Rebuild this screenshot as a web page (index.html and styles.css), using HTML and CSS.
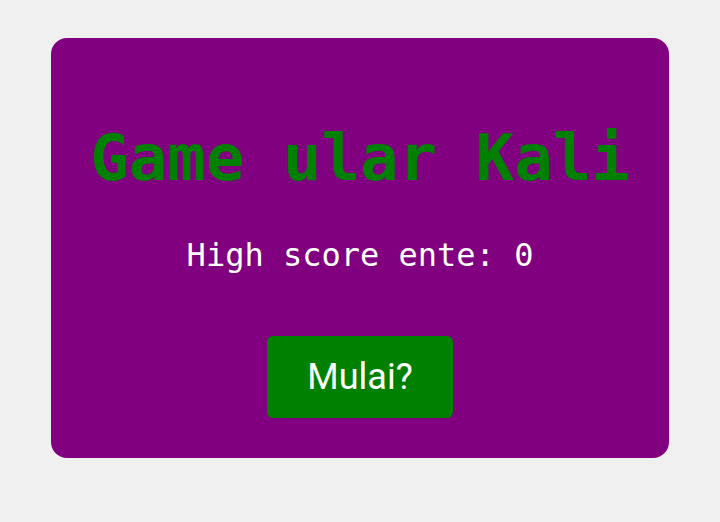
FILE: index.html
```html
<!DOCTYPE html>
<html>
<head>
<meta charset="utf-8">
<link rel="stylesheet" href="styles.css">
</head>
<body>
<div class="card">
  <h1 class="title">Game ular Kali</h1>
  <p class="score">High score ente: 0</p>
  <button class="start">Mulai?</button>
</div>
</body>
</html>
```
FILE: styles.css
```css
html, body {
  margin: 0;
  padding: 0;
}
body {
  background: #f0f0f0;
  width: 720px;
  height: 522px;
  padding-top: 38px;
  box-sizing: border-box;
}
.card {
  width: 618px;
  height: 420px;
  margin: 0 auto;
  background: #800080;
  border-radius: 16px;
  display: flex;
  flex-direction: column;
  align-items: center;
  box-sizing: border-box;
  padding-top: 80px;
}
.title {
  margin: 0;
  font-family: "DejaVu Sans Mono", monospace;
  font-weight: bold;
  font-size: 64px;
  line-height: 80px;
  color: #008000;
  white-space: nowrap;
}
.score {
  margin: 37px 0 0;
  font-family: "DejaVu Sans Mono", monospace;
  font-size: 32px;
  line-height: 40px;
  color: #ffffff;
}
.start {
  margin-top: 61px;
  width: 186px;
  height: 82px;
  border: none;
  border-radius: 6px;
  background: #008000;
  color: #ffffff;
  font-family: Roboto, sans-serif;
  font-size: 36px;
  padding: 0;
}
```
